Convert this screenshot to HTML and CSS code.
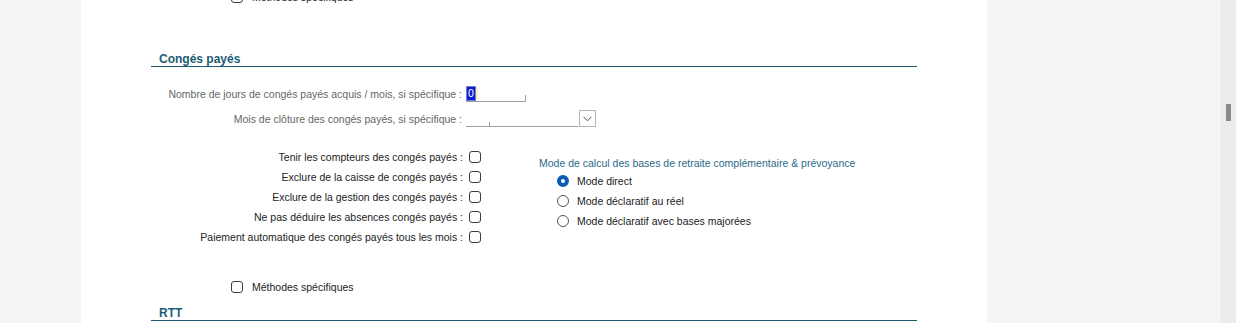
FILE: index.html
```html
<!DOCTYPE html>
<html lang="fr">
<head>
  <meta charset="UTF-8" />
  <title>Paramètres salarié - Congés payés</title>
  <link rel="stylesheet" href="styles.css">
</head>
<body>
  <div class="page">
    <div class="gutter"></div>

    <div class="panel">
      <div class="check-line prev-line">
        <span class="box"></span>
        <span>Méthodes spécifiques</span>
      </div>

      <div class="section">
        <h2 class="section-title">Congés payés</h2>

        <div class="field-row first">
          <label class="field-label" for="nb-jours">Nombre de jours de congés payés acquis / mois, si spécifique :</label>
          <span class="text-input" id="nb-jours"><span class="selected">0</span><span class="caret"></span></span>
        </div>

        <div class="field-row">
          <label class="field-label" for="mois-cloture">Mois de clôture des congés payés, si spécifique :</label>
          <span class="combo" id="mois-cloture">
            <span class="combo-value"></span>
            <span class="combo-btn">
              <svg width="9" height="6" viewBox="0 0 9 6"><path d="M0.5 0.8 L4.5 4.8 L8.5 0.8" fill="none" stroke="#555" stroke-width="1"/></svg>
            </span>
          </span>
        </div>

        <div class="options">
          <div class="check-list">
            <div class="check-row"><span>Tenir les compteurs des congés payés :</span><span class="box"></span></div>
            <div class="check-row"><span>Exclure de la caisse de congés payés :</span><span class="box"></span></div>
            <div class="check-row"><span>Exclure de la gestion des congés payés :</span><span class="box"></span></div>
            <div class="check-row"><span>Ne pas déduire les absences congés payés :</span><span class="box"></span></div>
            <div class="check-row"><span>Paiement automatique des congés payés tous les mois :</span><span class="box"></span></div>
          </div>

          <div class="radio-group">
            <div class="radio-title">Mode de calcul des bases de retraite complémentaire &amp; prévoyance</div>
            <div class="radio-row"><span class="radio checked"></span><span>Mode direct</span></div>
            <div class="radio-row"><span class="radio"></span><span>Mode déclaratif au réel</span></div>
            <div class="radio-row"><span class="radio"></span><span>Mode déclaratif avec bases majorées</span></div>
          </div>
        </div>

        <div class="check-line methods">
          <span class="box"></span>
          <span>Méthodes spécifiques</span>
        </div>
      </div>

      <div class="section">
        <h2 class="section-title">RTT</h2>
      </div>
    </div>

    <div class="spacer"></div>

    <div class="scrollbar">
      <div class="thumb"></div>
    </div>
  </div>
</body>
</html>
```

FILE: styles.css
```css
body {
  margin: 0;
  font-family: "Liberation Sans", Arial, sans-serif;
  font-size: 10.5px;
  background-color: #f4f4f4;
  overflow: hidden;
}
.page {
  display: flex;
  height: 323px;
  overflow: hidden;
}
.gutter {
  width: 81px;
  flex-shrink: 0;
}
.panel {
  width: 766px;
  flex-shrink: 0;
  background-color: white;
  padding: 0 70px 0 70px;
}
.spacer {
  flex: 1;
}
.scrollbar {
  width: 16px;
  flex-shrink: 0;
  border-left: 1px solid #fdfdfd;
  background-color: #ececec;
  padding-top: 104px;
}
.thumb {
  width: 5px;
  height: 17px;
  margin-left: 6px;
  background-color: #8a8a8a;
}

/* checkboxes */
.box {
  display: inline-block;
  width: 10px;
  height: 10px;
  border: 1px solid #3c3c3c;
  border-radius: 3px;
  background: white;
  flex-shrink: 0;
}
.check-line {
  display: flex;
  align-items: center;
  gap: 9px;
  height: 20px;
  padding-left: 80px;
  color: #222;
}
.prev-line {
  margin-top: -13px;
}

/* sections */
.section-title {
  margin: 0;
  font-size: 12px;
  font-weight: bold;
  color: #1e5c76;
  padding: 0 0 0 8px;
  line-height: 14px;
  border-bottom: 1px solid #1f5a70;
}
.section {
  margin-top: 45px;
}
.section + .section {
  margin-top: 9px;
}

/* text fields */
.field-row {
  display: flex;
  align-items: center;
  height: 17px;
  margin-top: 8px;
}
.field-row.first {
  margin-top: 18px;
}
.field-label {
  width: 311px;
  text-align: right;
  color: #666;
  padding-right: 4px;
  white-space: nowrap;
}
.text-input {
  position: relative;
  display: flex;
  align-items: center;
  width: 60px;
  height: 16px;
  border-bottom: 1px solid #a0a0a0;
}
.text-input::after {
  content: "";
  position: absolute;
  right: 0;
  bottom: 0;
  width: 1px;
  height: 6px;
  background-color: #a0a0a0;
}
.selected {
  background-color: #0a1fd0;
  color: white;
  padding: 0 1px;
  line-height: 13px;
  border: 1px solid #6f7cd8;
}
.caret {
  width: 2px;
  height: 12px;
  background-color: #fff4b0;
}
.combo {
  display: flex;
  align-items: flex-end;
}
.combo-value {
  position: relative;
  width: 112px;
  height: 16px;
  border-bottom: 1px solid #a0a0a0;
}
.combo-value::after {
  content: "";
  position: absolute;
  left: 23px;
  bottom: 0;
  width: 1px;
  height: 4px;
  background-color: #a0a0a0;
}
.combo-btn {
  display: flex;
  align-items: center;
  justify-content: center;
  width: 15px;
  height: 15px;
  margin-left: 1px;
  border: 1px solid #b5b5b5;
  background: white;
}

/* option block */
.options {
  display: flex;
  margin-top: 20px;
}
.check-list {
  width: 330px;
}
.check-row {
  display: flex;
  align-items: center;
  justify-content: flex-end;
  gap: 6px;
  height: 20px;
  color: #222;
}
.radio-group {
  margin-left: 58px;
  padding-top: 9px;
}
.radio-title {
  color: #2b6a88;
  height: 15px;
  line-height: 14px;
}
.radio-row {
  display: flex;
  align-items: center;
  gap: 8px;
  height: 20px;
  padding-left: 18px;
  color: #222;
}
.radio {
  width: 10px;
  height: 10px;
  border: 1px solid #555;
  border-radius: 50%;
  background: white;
}
.radio.checked {
  width: 4px;
  height: 4px;
  border: 4px solid #0a5cb0;
}
.methods {
  margin-top: 30px;
}
```
